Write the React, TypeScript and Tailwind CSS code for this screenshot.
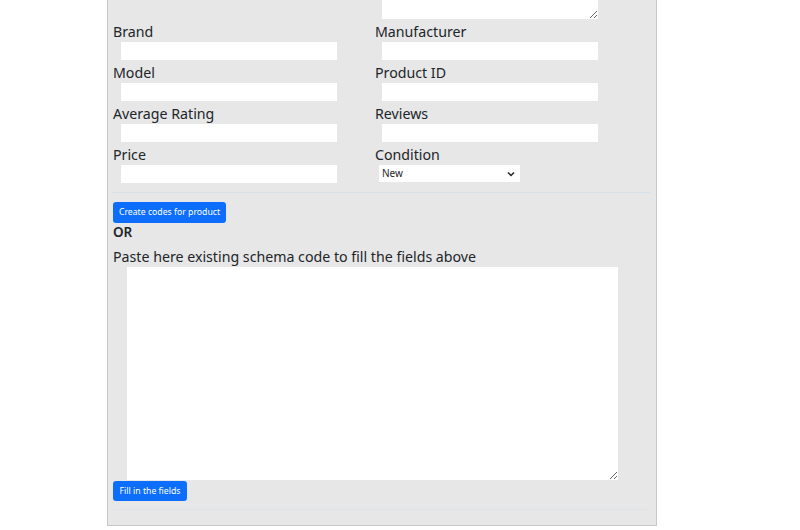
import React from "react";

function Field({ label, indent = "ml-[8px]" }: { label: string; indent?: string }) {
  return (
    <div className="flex flex-col">
      <label className="block h-[23px] pt-px text-[14.2px] leading-[23px] text-[#212529]">{label}</label>
      <input className={`${indent} block h-[18px] w-[216px] border-0 bg-white outline-none`} />
    </div>
  );
}

export default function App() {
  return (
    <div className="w-[800px] h-[530px] overflow-hidden bg-white" style={{ fontFamily: '"Noto Sans", "Open Sans", sans-serif' }}>
      <div className="ml-[107px] w-[550px] h-[526px] border-x border-b border-[#c9c9c9] bg-[#e7e7e7] pl-[5px] pr-[5px]">
        <div className="grid grid-cols-[262px_262px]">
          <div />
          <div className="-mt-[40px]">
            <textarea className="ml-[7px] block h-[59px] w-[216px] resize border-0 bg-white outline-none" />
          </div>
          <Field label="Brand" />
          <Field label="Manufacturer" indent="ml-[7px]" />
          <Field label="Model" />
          <Field label="Product ID" indent="ml-[7px]" />
          <Field label="Average Rating" />
          <Field label="Reviews" indent="ml-[7px]" />
          <Field label="Price" />
          <div className="flex flex-col">
            <label className="block h-[23px] pt-px text-[14.2px] leading-[23px] text-[#212529]">Condition</label>
            <div className="relative ml-[4px] h-[17px] w-[141px] bg-white">
              <select className="block h-[17px] w-[141px] appearance-none border-0 bg-transparent py-0 pl-[3px] text-[10px] leading-[17px] text-[#212529] outline-none">
                <option>New</option>
              </select>
              <svg className="pointer-events-none absolute right-[5px] top-[6px]" width="8" height="6" viewBox="0 0 8 6">
                <path d="M1 1.5 L4 4.5 L7 1.5" fill="none" stroke="#222" strokeWidth="1.5" />
              </svg>
            </div>
          </div>
        </div>
        <div className="mt-[9px] h-px w-[537px] bg-[#d5e2ec]" />
        <button className="mt-[9px] block h-[21px] w-[113px] rounded-[3px] bg-[#0d6efd] text-center text-[8.7px] leading-[21px] text-white">
          Create codes for product
        </button>
        <div className="h-[19px] text-[13.5px] font-semibold leading-[19px] text-[#212529]">OR</div>
        <div className="mt-[4px] h-[21px] text-[14.2px] leading-[21px] text-[#212529]">
          Paste here existing schema code to fill the fields above
        </div>
        <textarea className="ml-[14px] block h-[213px] w-[491px] resize border-0 bg-white outline-none" />
        <button className="mt-px block h-[20px] w-[74px] rounded-[3px] bg-[#0d6efd] text-center text-[8.7px] leading-[20px] text-white">
          Fill in the fields
        </button>
        <div className="mt-[8px] h-px w-[537px] bg-[#dde3e8]" />
      </div>
    </div>
  );
}
